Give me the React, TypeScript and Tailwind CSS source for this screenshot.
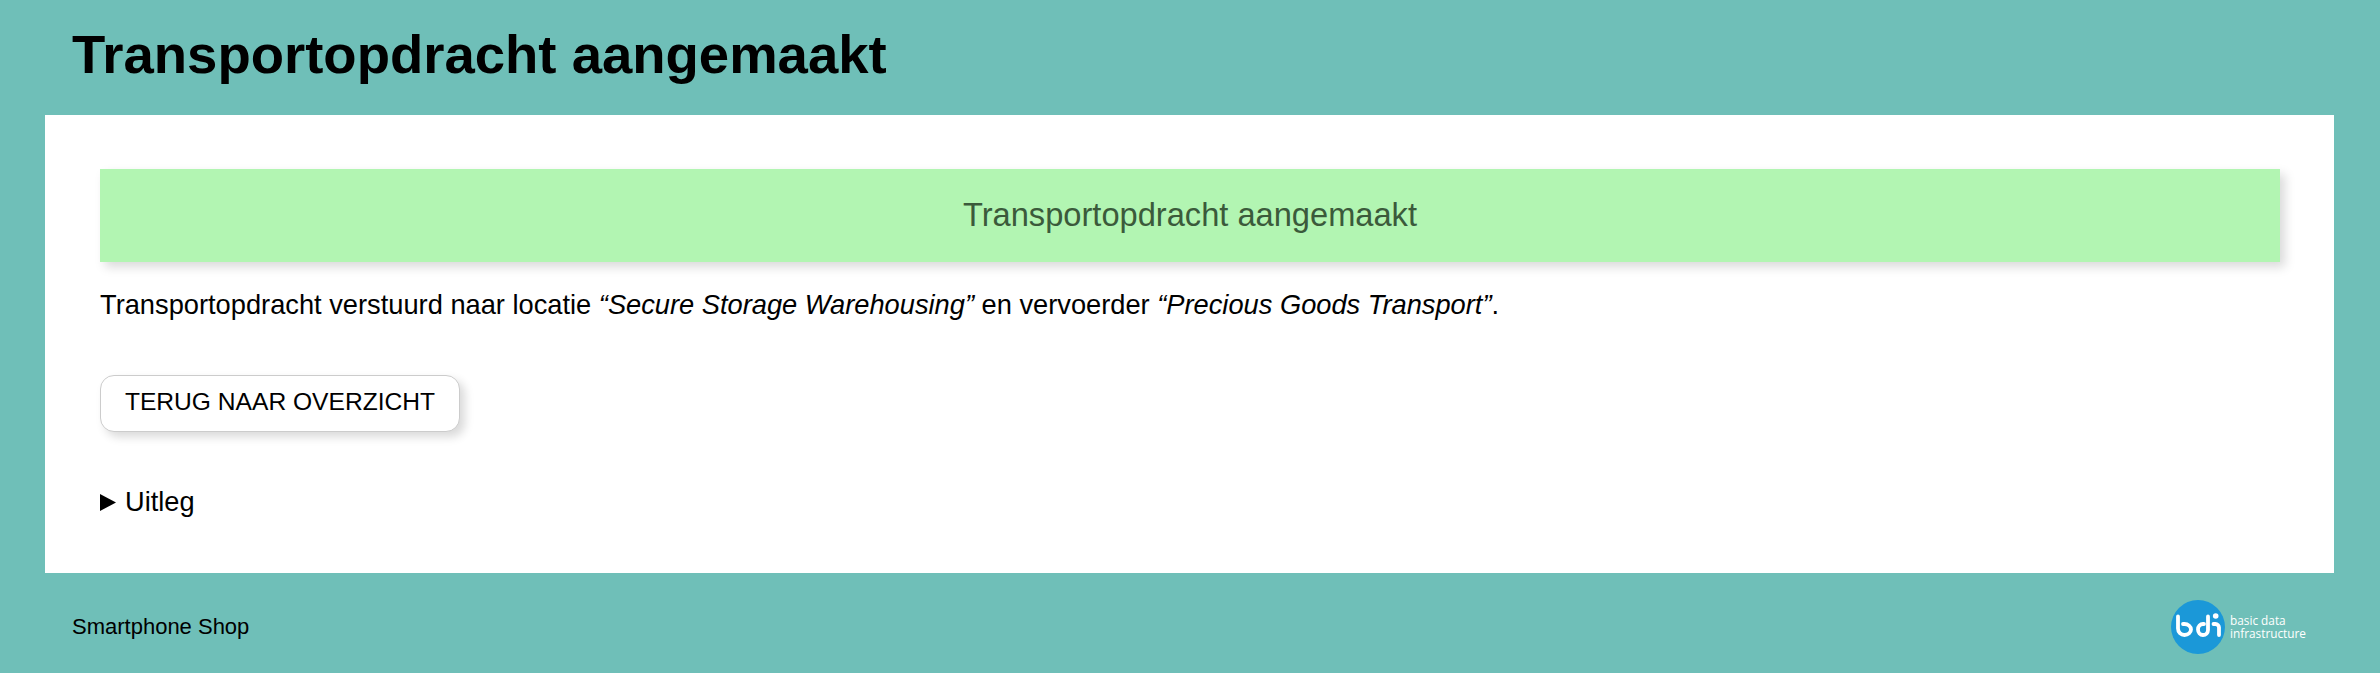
export default function App() {
    return (
        <div className="min-h-[673px] bg-[#6fbfb8] font-['Liberation_Sans',Arial,sans-serif] text-black flex flex-col">
            <header className="h-[115px] pl-[72px] pb-[4px] flex items-center">
                <h1 className="text-[54.5px] font-bold leading-none">Transportopdracht aangemaakt</h1>
            </header>

            <main className="ml-[45px] mr-[46px] bg-white pl-[55px] pr-[54px] pt-[54px] h-[458px]">
                <div className="h-[93px] pb-[1px] bg-[#b2f5b2] text-[#3b5a3b] text-[32.64px] flex items-center justify-center shadow-[5px_5px_10px_rgba(0,0,0,0.15)]">
                    Transportopdracht aangemaakt
                </div>
                <p className="mt-[23px] text-[27.25px] leading-[40px]">
                    Transportopdracht verstuurd naar locatie <em>“Secure Storage Warehousing”</em> en vervoerder{" "}
                    <em>“Precious Goods Transport”</em>.
                </p>
                <button className="mt-[50px] h-[57px] w-[360px] pb-[3px] rounded-[14px] border border-[#cccccc] bg-white text-[24.6px] shadow-[5px_5px_10px_rgba(0,0,0,0.15)] block">
                    TERUG NAAR OVERZICHT
                </button>
                <div className="mt-[50px] flex items-center text-[27.2px] leading-[40px]">
                    <svg width="16" height="17" viewBox="0 0 16 17" className="mr-[9px] shrink-0">
                        <path d="M0 0 L16 8.5 L0 17 Z" fill="#000" />
                    </svg>
                    Uitleg
                </div>
            </main>

            <footer className="flex-1 pl-[72px] pr-[74px] pt-[8px] flex items-center justify-between">
                <span className="text-[22px] mb-[2px]">Smartphone Shop</span>
                <div className="flex items-center gap-[5px]">
                    <svg width="54" height="54" viewBox="0 0 54 54">
                        <circle cx="27" cy="27" r="27" fill="#1b98d8" />
                        <g fill="none" stroke="#fff" strokeWidth="3.8" strokeLinecap="round">
                            <path d="M7 16.5 V28.5 a6.5 6.5 0 0 0 6.5 6.5 a6.5 5.5 0 0 0 0 -11 h-1.5" />
                            <path d="M37 16.5 V30 a5 5 0 0 1 -5 5 a5 5.5 0 0 1 0 -11 h1" />
                            <path d="M42.5 24 h2 a3.5 3.5 0 0 1 3.5 3.5 V35" />
                        </g>
                        <circle cx="44.7" cy="16" r="2.8" fill="#fff" />
                    </svg>
                    <div className="text-white text-[11.8px] leading-[13px] font-medium font-['Open_Sans',sans-serif]">
                        <div>basic data</div>
                        <div>infrastructure</div>
                    </div>
                </div>
            </footer>
        </div>
    );
}
